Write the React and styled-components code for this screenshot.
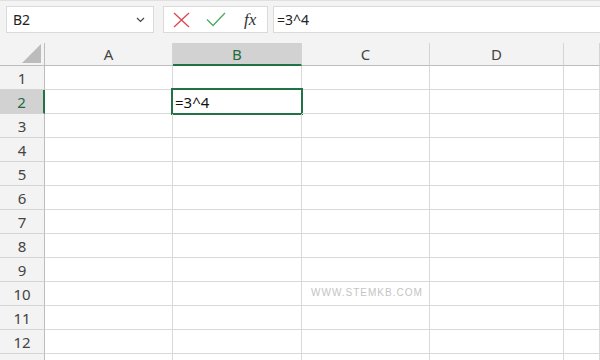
import React from 'react';
import styled, { createGlobalStyle } from 'styled-components';

const GlobalStyle = createGlobalStyle`
    * { box-sizing: border-box; }
    body {
        margin: 0;
        width: 600px;
        height: 360px;
        overflow: hidden;
        background: #ffffff;
        font-family: "Noto Sans", "Open Sans", sans-serif;
    }
`;

const COLS = ['A', 'B', 'C', 'D', ''];
const ROWS = [1, 2, 3, 4, 5, 6, 7, 8, 9, 10, 11, 12, 13];

const Window = styled.div`
    position: relative;
    width: 600px;
    height: 360px;
    overflow: hidden;
    background: #ffffff;
`;

const FormulaBar = styled.div`
    display: flex;
    align-items: flex-start;
    height: 43px;
    padding: 5px 0 0 6px;
    background: #f3f3f3;
    border-top: 1px solid #e0e0e0;
`;

const NameBox = styled.div`
    display: flex;
    align-items: center;
    justify-content: space-between;
    width: 148px;
    height: 27px;
    padding: 0 8px 0 6px;
    background: #ffffff;
    border: 1px solid #dadada;
    font-size: 14px;
    color: #222;
`;

const ActionBox = styled.div`
    display: flex;
    align-items: center;
    width: 105px;
    height: 27px;
    margin-left: 9px;
    padding-left: 9px;
    gap: 16px;
    background: #ffffff;
    border: 1px solid #dadada;
`;

const Fx = styled.span`
    font-family: "Liberation Serif", "DejaVu Serif", serif;
    font-style: italic;
    font-size: 17px;
    color: #333;
    margin-left: 2px;
    line-height: 1;
`;

const FormulaInput = styled.div`
    flex: 1;
    display: flex;
    align-items: center;
    height: 27px;
    margin-left: 5px;
    padding-left: 3px;
    background: #ffffff;
    border: 1px solid #dadada;
    border-right: none;
    font-size: 14px;
    color: #222;
`;

const Grid = styled.div`
    display: grid;
    grid-template-columns: 45px 128px 129px 128px 134px 1fr;
    grid-template-rows: 23px repeat(13, 24px);
`;

const HeaderCell = styled.div`
    display: flex;
    align-items: center;
    justify-content: center;
    background: ${p => (p.$active ? '#d2d2d2' : '#f3f3f3')};
    border-right: 1px solid ${p => (p.$corner ? '#bdbdbd' : '#d4d4d4')};
    border-bottom: ${p => (p.$active ? '2px solid #217346' : '1px solid #bdbdbd')};
    font-size: 15px;
    color: ${p => (p.$active ? '#1e6b41' : '#444')};
    &:last-child { border-right: none; }
`;

const Corner = styled(HeaderCell)`
    justify-content: flex-end;
    align-items: flex-end;
    padding: 0 3px 2px 0;
`;

const RowHeader = styled.div`
    display: flex;
    align-items: center;
    justify-content: center;
    background: ${p => (p.$active ? '#d2d2d2' : '#f3f3f3')};
    border-right: ${p => (p.$active ? '2px solid #217346' : '1px solid #bdbdbd')};
    border-bottom: 1px solid #d4d4d4;
    font-size: 15px;
    color: ${p => (p.$active ? '#1e6b41' : '#444')};
`;

const Cell = styled.div`
    position: relative;
    display: flex;
    align-items: center;
    padding-left: 2px;
    border-right: 1px solid #d9d9d9;
    border-bottom: 1px solid #d9d9d9;
    font-size: 15px;
    color: #111;
`;

const Selection = styled.div`
    position: absolute;
    top: -2px;
    left: -2px;
    right: -2px;
    bottom: -2px;
    border: 2px solid #217346;
    pointer-events: none;
`;

const Watermark = styled.div`
    position: absolute;
    left: 311px;
    top: 287px;
    font-family: "Liberation Sans", Arial, sans-serif;
    font-size: 10px;
    letter-spacing: 1px;
    color: #c4c4c4;
`;

const CrossIcon = () => (
    <svg width="17" height="16" viewBox="0 0 17 16">
        <path d="M1 1 L16 15 M16 1 L1 15" stroke="#e0454d" strokeWidth="1.3" fill="none" />
    </svg>
);

const CheckIcon = () => (
    <svg width="20" height="15" viewBox="0 0 20 15">
        <path d="M1 7.5 L7 13.5 L19 1" stroke="#4caa5a" strokeWidth="1.3" fill="none" />
    </svg>
);

const Chevron = () => (
    <svg width="9" height="6" viewBox="0 0 9 6">
        <path d="M1 1 L4.5 4.5 L8 1" stroke="#444" strokeWidth="1.2" fill="none" />
    </svg>
);

const CornerTriangle = () => (
    <svg width="19" height="19" viewBox="0 0 19 19">
        <polygon points="19,0 19,19 0,19" fill="#bcbcbc" />
    </svg>
);

const App = () => {
    return (
        <Window>
            <GlobalStyle />
            <FormulaBar>
                <NameBox>
                    <span>B2</span>
                    <Chevron />
                </NameBox>
                <ActionBox>
                    <CrossIcon />
                    <CheckIcon />
                    <Fx>fx</Fx>
                </ActionBox>
                <FormulaInput>=3^4</FormulaInput>
            </FormulaBar>
            <Grid>
                <Corner $corner>
                    <CornerTriangle />
                </Corner>
                {COLS.map((c, i) => (
                    <HeaderCell key={i} $active={c === 'B'}>{c}</HeaderCell>
                ))}
                {ROWS.map(r => (
                    <React.Fragment key={r}>
                        {/* the last row is only partly in view, its number lies below the edge */}
                        <RowHeader $active={r === 2}>{r < 13 ? r : ''}</RowHeader>
                        {COLS.map((c, i) => (
                            <Cell key={i}>
                                {r === 2 && c === 'B' && (
                                    <>
                                        =3^4
                                        <Selection />
                                    </>
                                )}
                            </Cell>
                        ))}
                    </React.Fragment>
                ))}
            </Grid>
            <Watermark>WWW.STEMKB.COM</Watermark>
        </Window>
    );
};

export default App;
